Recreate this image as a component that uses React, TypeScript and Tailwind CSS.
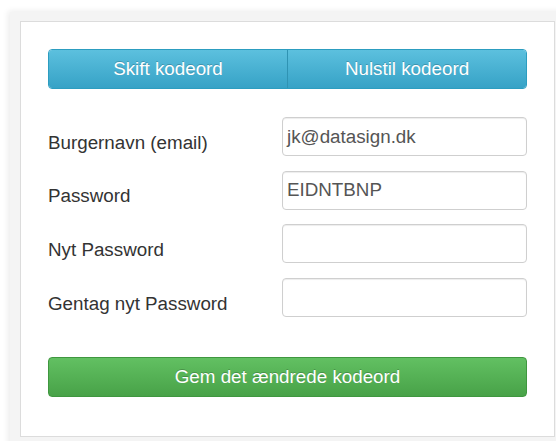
import React from "react";

const font = { fontFamily: '"Liberation Sans", Arial, sans-serif' };

function Row({ label, value }: { label: string; value: string }) {
  return (
    <div className="flex items-start h-[39px]">
      <label className="w-[234px] shrink-0 pt-[14.5px] text-[18.8px] leading-[22px] text-[#333]">
        {label}
      </label>
      <div className="flex-1 h-[39px] rounded-[4px] border border-[#cfcfcf] bg-white shadow-[inset_0_1px_1px_rgba(0,0,0,0.075)] flex items-center pl-[4px] text-[18.8px] leading-[22px] text-[#555]">
        {value}
      </div>
    </div>
  );
}

export default function App() {
  return (
    <div className="w-[556px] h-[441px] overflow-hidden bg-white" style={font}>
      <div className="pl-[10px] pt-[12px]">
        <div className="w-[560px] h-[440px] bg-[#f4f4f4] shadow-[-2px_-1px_6px_rgba(0,0,0,0.08)] pl-[10px] pt-[9px]">
          <div className="w-[535px] h-[416px] bg-white border border-[#dcdcdc] px-[27px] pt-[27px]">
            {/* tab switcher */}
            <div className="flex h-[40px] rounded-[4px] border border-[#2c9dc0] overflow-hidden text-white text-[18.8px] [text-shadow:0_-1px_0_rgba(0,0,0,0.2)]">
              <div className="flex-1 flex items-center justify-center bg-[linear-gradient(#5cc0de,#36a2c6)] border-r border-[#2f93b3]">
                Skift kodeord
              </div>
              <div className="flex-1 flex items-center justify-center bg-[linear-gradient(#5cc0de,#36a2c6)]">
                Nulstil kodeord
              </div>
            </div>

            <div className="mt-[28px] flex flex-col gap-[14.7px]">
              <Row label="Burgernavn (email)" value="jk@datasign.dk" />
              <Row label="Password" value="EIDNTBNP" />
              <Row label="Nyt Password" value="" />
              <Row label="Gentag nyt Password" value="" />
            </div>

            <div className="mt-[40px] h-[40px] rounded-[4px] border border-[#3f973f] bg-[linear-gradient(#62c062,#48a248)] flex items-center justify-center text-white text-[18.8px] [text-shadow:0_-1px_0_rgba(0,0,0,0.2)]">
              Gem det ændrede kodeord
            </div>
          </div>
        </div>
      </div>
    </div>
  );
}
